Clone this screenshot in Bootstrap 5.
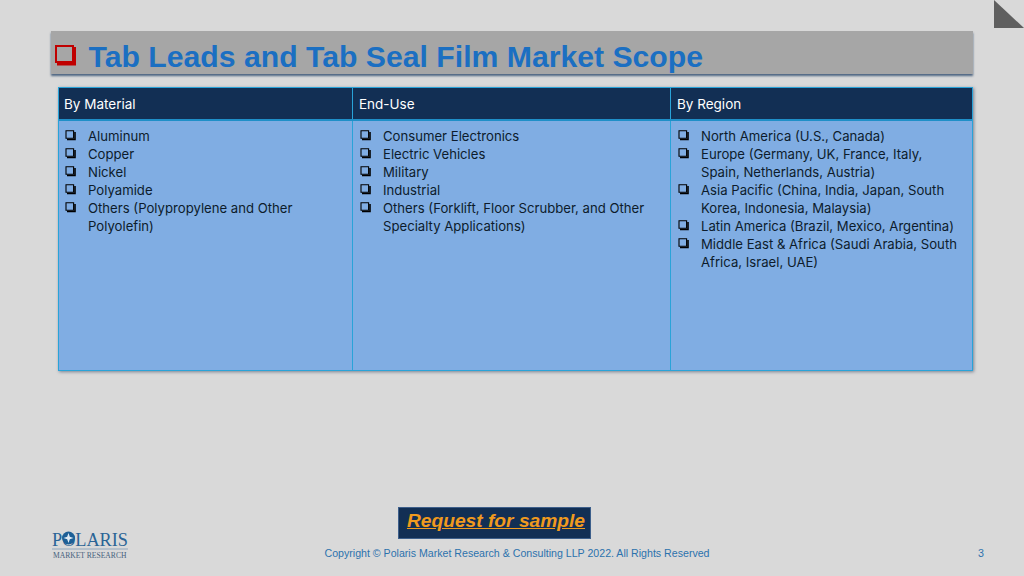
<!DOCTYPE html>
<html lang="en">
<head>
<meta charset="utf-8">
<title>Tab Leads and Tab Seal Film Market Scope</title>
<link href="https://cdn.jsdelivr.net/npm/bootstrap@5.3.0/dist/css/bootstrap.min.css" rel="stylesheet">
<style>
html,body{margin:0;height:100%}
body{background:#d9d9d9;font-family:"Liberation Sans",Arial,sans-serif}
.slide{width:1024px;height:576px;position:relative;overflow:hidden;padding:31px 51px 0 51px}
.corner{position:absolute;left:994px;top:0;width:30px;height:28px}
.title-bar{height:43px;background:#a6a6a6;box-shadow:0 2px 2px rgba(31,63,100,.75);padding-left:3px;width:922px}
.title-bar h1{font-family:"Liberation Sans",Arial,sans-serif;font-weight:700;font-size:30.2px;line-height:1;color:#1b6fc2;margin:10px 0 0 12.5px}
.title-bar svg{margin-top:5px}
.scope{margin:13px 0 0 7px;width:915px;height:284px;border:1px solid #29a3d8;box-shadow:1px 1px 3px rgba(40,60,90,.55);font-family:"Inter","Noto Sans",sans-serif;font-size:13.15px;line-height:18px}
.col-a{width:294px}.col-b{width:318px}.col-c{flex:1 1 0}
.head-row{height:33px;background:#122f54;color:#fff;border-bottom:2px solid #1f8fc8;font-size:13.5px}
.body-row{background:#80ade3;color:#0d1c2c;height:250px}
.head-cell{padding:7px 6px 0 5px;border-right:1px solid #29a3d8}
.head-cell.col-b,.head-cell.col-c{padding-left:6px}
.body-cell{padding:6px 6px 0 6px;border-right:1px solid #29a3d8}
.body-cell.col-b,.body-cell.col-c{padding-left:7px}
.body-cell.col-c{padding-right:12px}
.head-cell:last-child,.body-cell:last-child{border-right:0}
.checks{list-style:none;margin:0;padding:0}
.checks li{display:flex}
.checks svg{flex:none;width:11px;height:11px;margin:3px 12px 0 0}
.req{background:#122f54;width:193px;height:32px;margin-left:347px;margin-top:136px;padding-left:3px;border:1px solid #3d5f8b;text-align:center;line-height:26px}
.req a{color:#f09a1e;font-weight:700;font-style:italic;font-size:19.2px}
.foot{height:36px;margin-left:1px}
.logo{flex:none;width:90px;height:32px;margin-top:-9px}
.copy{flex:none;font-size:10.62px;line-height:13px;color:#2c72ad;margin-left:182px;width:386px;text-align:center;margin-top:8px;white-space:nowrap}
.pg{font-size:10.7px;line-height:13px;color:#2c72ad;margin-left:268px;margin-top:8px}
.foot .logo text{font-family:"Liberation Serif",serif}
</style>
</head>
<body>
<svg width="0" height="0" class="position-absolute">
<symbol id="cb" viewBox="0 0 11 11"><path d="M1 .7H8.6V8.3H1Z" fill="none" stroke="#000" stroke-width="1.1"/><path d="M2 9.5H10V2" fill="none" stroke="#000" stroke-width="1.6"/></symbol>
</svg>
<div class="slide d-flex flex-column">
  <svg class="corner" viewBox="0 0 30 28"><path d="M0 0L30 28H0Z" fill="#5f5f5f"/></svg>
  <div class="title-bar d-flex align-items-center">
    <svg width="22" height="22" viewBox="0 0 22 22"><path d="M2 2H19V18H2Z" fill="none" stroke="#c00000" stroke-width="2"/><path d="M3 20H20.5V3" fill="none" stroke="#c00000" stroke-width="3"/></svg>
    <h1>Tab Leads and Tab Seal Film Market Scope</h1>
  </div>
  <div class="scope d-flex flex-column">
    <div class="head-row d-flex">
      <div class="head-cell col-a">By Material</div>
      <div class="head-cell col-b">End-Use</div>
      <div class="head-cell col-c">By Region</div>
    </div>
    <div class="body-row d-flex">
      <div class="body-cell col-a"><ul class="checks">
        <li><svg><use href="#cb"/></svg><span>Aluminum</span></li>
        <li><svg><use href="#cb"/></svg><span>Copper</span></li>
        <li><svg><use href="#cb"/></svg><span>Nickel</span></li>
        <li><svg><use href="#cb"/></svg><span>Polyamide</span></li>
        <li><svg><use href="#cb"/></svg><span>Others (Polypropylene and Other Polyolefin)</span></li>
      </ul></div>
      <div class="body-cell col-b"><ul class="checks">
        <li><svg><use href="#cb"/></svg><span>Consumer Electronics</span></li>
        <li><svg><use href="#cb"/></svg><span>Electric Vehicles</span></li>
        <li><svg><use href="#cb"/></svg><span>Military</span></li>
        <li><svg><use href="#cb"/></svg><span>Industrial</span></li>
        <li><svg><use href="#cb"/></svg><span>Others (Forklift, Floor Scrubber, and Other Specialty Applications)</span></li>
      </ul></div>
      <div class="body-cell col-c"><ul class="checks">
        <li><svg><use href="#cb"/></svg><span>North America (U.S., Canada)</span></li>
        <li><svg><use href="#cb"/></svg><span>Europe (Germany, UK, France, Italy, Spain, Netherlands, Austria)</span></li>
        <li><svg><use href="#cb"/></svg><span>Asia Pacific (China, India, Japan, South Korea, Indonesia, Malaysia)</span></li>
        <li><svg><use href="#cb"/></svg><span>Latin America (Brazil, Mexico, Argentina)</span></li>
        <li><svg><use href="#cb"/></svg><span>Middle East &amp; Africa (Saudi Arabia, South Africa, Israel, UAE)</span></li>
      </ul></div>
    </div>
  </div>
  <div class="req"><a href="#">Request for sample</a></div>
  <div class="foot d-flex align-items-start">
    <svg class="logo" viewBox="0 0 90 32">
      <text x="0" y="15" font-size="19" fill="#2a6496" transform="translate(0 .6) scale(.96 1)">POLARIS</text>
      <circle cx="16.500" cy="8" r="6.500" fill="#1d5f96"/><path d="M16.500 3L17.800 6.700L21.500 8L17.800 9.300L16.500 13L15.200 9.300L11.500 8L15.200 6.700Z" fill="#dfeaf3"/>
      <path d="M0 19H76" stroke="#8fa6bc" stroke-width="1"/>
      <text x="1" y="28.500" font-size="8" fill="#44607c" transform="scale(.95 1)">MARKET RESEARCH</text>
    </svg>
    <div class="copy">Copyright © Polaris Market Research &amp; Consulting LLP 2022. All Rights Reserved</div>
    <div class="pg">3</div>
  </div>
</div>
</body>
</html>
